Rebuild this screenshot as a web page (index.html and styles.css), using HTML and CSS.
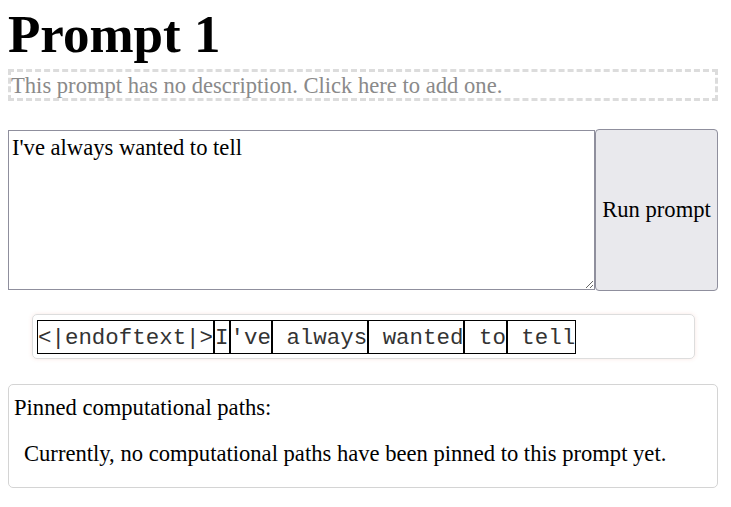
FILE: index.html
```html
<!DOCTYPE html>
<html>
<head>
<meta charset="utf-8">
<title>Prompt 1</title>
<link rel="stylesheet" href="styles.css">
</head>
<body>
<div class="page">
  <h1 class="title">Prompt 1</h1>
  <div class="description">This prompt has no description. Click here to add one.</div>
  <div class="prompt-row">
    <textarea class="prompt-input">I've always wanted to tell</textarea>
    <button class="run-button">Run prompt</button>
  </div>
  <div class="tokens"><span class="token">&lt;|endoftext|&gt;</span><span class="token">I</span><span class="token">'ve</span><span class="token"> always</span><span class="token"> wanted</span><span class="token"> to</span><span class="token"> tell</span></div>
  <div class="pinned">
    <div class="pinned-title">Pinned computational paths:</div>
    <p class="pinned-empty">Currently, no computational paths have been pinned to this prompt yet.</p>
  </div>
</div>
</body>
</html>
```

FILE: styles.css
```css
html, body {
  background: #fff;
}
body {
  margin: 8px;
  font-family: "Liberation Serif", "Times New Roman", serif;
  font-size: 22.6px;
  color: #000;
}
.page {
  width: 710px;
}
.title {
  margin: 0;
  font-size: 53px;
  line-height: 52px;
  font-weight: bold;
}
.description {
  margin-top: 9px;
  border: 3px dashed #dcdcdc;
  color: #8a8a8a;
  height: 26px;
  line-height: 27px;
  white-space: nowrap;
}
.prompt-row {
  margin-top: 28px;
  display: flex;
  align-items: center;
}
.prompt-input {
  box-sizing: border-box;
  width: 587px;
  height: 160px;
  margin: 0;
  padding: 4px 3px 2px;
  border: 1px solid #8f8f9d;
  font-family: "Liberation Serif", "Times New Roman", serif;
  font-size: 22.6px;
  line-height: 26px;
  color: #000;
  background: #fff;
  resize: both;
}
.run-button {
  box-sizing: border-box;
  width: 123px;
  height: 162px;
  margin: 0;
  padding: 0;
  border: 1px solid #8f8f9d;
  border-radius: 4px;
  background: #e9e9ed;
  font-family: "Liberation Serif", "Times New Roman", serif;
  font-size: 22.6px;
  color: #000;
}
.tokens {
  margin: 23px 23px 25px 24px;
  padding: 5px 4px 4px;
  border: 1px solid #dddddd;
  border-radius: 5px;
  box-shadow: 0 0 4px rgba(230, 120, 100, 0.18);
  display: flex;
}
.token {
  display: inline-block;
  border: 1px solid #000;
  white-space: pre;
  font-family: "Liberation Mono", "Courier New", monospace;
  font-size: 22.45px;
  line-height: 34px;
  height: 32px;
  color: #333;
}
.pinned {
  box-sizing: border-box;
  height: 104px;
  border: 1px solid #d4d4d4;
  border-radius: 5px;
  padding: 10px 5px 0;
}
.pinned-title {
  line-height: 26px;
}
.pinned-empty {
  margin: 20px 0 0 10px;
  line-height: 26px;
}
```
